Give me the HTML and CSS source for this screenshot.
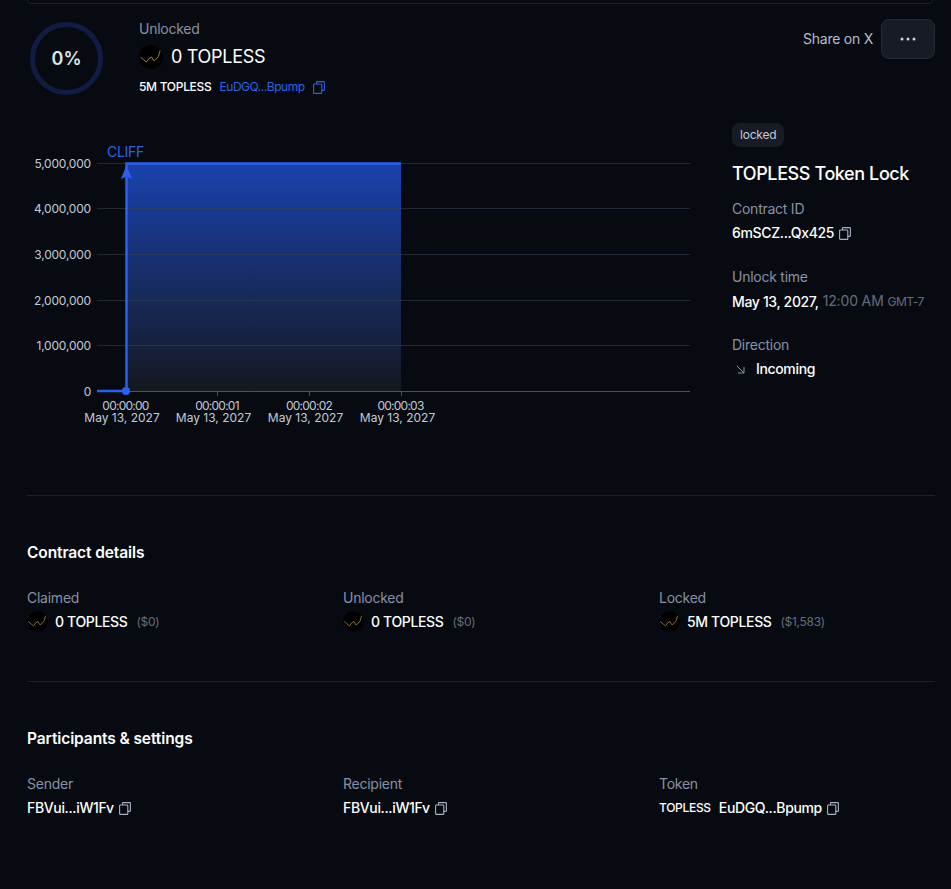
FILE: index.html
```html
<!DOCTYPE html>
<html lang="en">
<head>
    <meta charset="UTF-8">
    <meta name="viewport" content="width=device-width, initial-scale=1.0">
    <title>TOPLESS Token Lock</title>
    <link rel="stylesheet" href="styles.css">
</head>
<body>
    <svg class="defs" width="0" height="0">
        <symbol id="copy" viewBox="0 0 12 13">
            <path d="M3.500 3V1.200c0-.3.200-.6.600-.6h6.700c.3 0 .6.300.6.600v7.600c0 .3-.3.600-.6.600H8.800" fill="none" stroke="currentColor" stroke-width="1.100"/>
            <rect x=".6" y="3" width="8.200" height="9.400" rx=".7" fill="none" stroke="currentColor" stroke-width="1.100"/>
        </symbol>
        <symbol id="logo" viewBox="0 0 24 24">
            <circle cx="12" cy="12" r="12" fill="#000"/>
            <path d="M1.400 12l3 2.500 3 2.500 2.500-3.500 2.700-1.500 1.800 3.500 2-.5 3-3.500 1.800-6" fill="none" stroke="#a88a4a" stroke-width=".9"/>
        </symbol>
    </svg>

    <main class="page">
        <div class="top-card"></div>

        <header class="head">
            <div class="ring"><span>0%</span></div>
            <div class="head-info">
                <div class="label">Unlocked</div>
                <div class="head-amount">
                    <svg class="logo"><use href="#logo"/></svg>
                    <span>0 TOPLESS</span>
                </div>
                <div class="head-meta">
                    <span class="head-total">5M TOPLESS</span>
                    <span class="head-addr">EuDGQ...Bpump</span>
                    <svg class="copy blue"><use href="#copy"/></svg>
                </div>
            </div>
            <div class="actions">
                <span class="share">Share on X</span>
                <button class="more" type="button" aria-label="More">
                    <svg width="16" height="4" viewBox="0 0 16 4"><circle cx="2" cy="2" r="1.500" fill="#cbd5e1"/><circle cx="8" cy="2" r="1.500" fill="#cbd5e1"/><circle cx="14" cy="2" r="1.500" fill="#cbd5e1"/></svg>
                </button>
            </div>
        </header>

        <section class="overview">
            <svg class="chart" width="680" height="320" viewBox="27 122 680 320">
                <defs>
                    <linearGradient id="area" x1="0" y1="0" x2="0" y2="1">
                        <stop offset="0" stop-color="#1a42ae"/>
                        <stop offset="1" stop-color="#14181f"/>
                    </linearGradient>
                </defs>
                <rect x="126" y="163" width="275" height="228" fill="url(#area)"/>
                <g class="grid">
                    <line x1="97" x2="690" y1="163.500" y2="163.500"/>
                    <line x1="97" x2="690" y1="208.500" y2="208.500"/>
                    <line x1="97" x2="690" y1="254.500" y2="254.500"/>
                    <line x1="97" x2="690" y1="300.500" y2="300.500"/>
                    <line x1="97" x2="690" y1="345.500" y2="345.500"/>
                </g>
                <g class="axis">
                    <line x1="97" x2="690" y1="391.500" y2="391.500"/>
                    <line x1="217.500" x2="217.500" y1="391" y2="396"/>
                    <line x1="309.500" x2="309.500" y1="391" y2="396"/>
                    <line x1="401.500" x2="401.500" y1="391" y2="396"/>
                </g>
                <g class="ylabels">
                    <text x="91" y="168">5,000,000</text>
                    <text x="91" y="213">4,000,000</text>
                    <text x="91" y="259">3,000,000</text>
                    <text x="91" y="305">2,000,000</text>
                    <text x="91" y="350">1,000,000</text>
                    <text x="91" y="396">0</text>
                </g>
                <path class="line" d="M97 391H126.500V163.500H401"/>
                <path d="M126.500 165l-5.500 14 5.500-2.500 5.500 2.500z" fill="#2a5ff0"/>
                <circle cx="126" cy="391" r="4" fill="#2a5ff0"/>
                <text class="cliff" x="107" y="157">CLIFF</text>
                <g class="xlabels">
                    <text class="tick-time" x="125.500" y="410">00:00:00</text>
                    <text x="122" y="422">May 13, 2027</text>
                    <text class="tick-time" x="217" y="410">00:00:01</text>
                    <text x="213.500" y="422">May 13, 2027</text>
                    <text class="tick-time" x="309" y="410">00:00:02</text>
                    <text x="305.500" y="422">May 13, 2027</text>
                    <text class="tick-time" x="400.500" y="410">00:00:03</text>
                    <text x="397.500" y="422">May 13, 2027</text>
                </g>
            </svg>

            <aside class="side">
                <span class="badge">locked</span>
                <h1>TOPLESS Token Lock</h1>
                <div class="side-item">
                    <div class="label">Contract ID</div>
                    <div class="value">6mSCZ...Qx425 <svg class="copy"><use href="#copy"/></svg></div>
                </div>
                <div class="side-item">
                    <div class="label">Unlock time</div>
                    <div class="value">May 13, 2027, <span class="time">12:00 AM <small>GMT-7</small></span></div>
                </div>
                <div class="side-item">
                    <div class="label">Direction</div>
                    <div class="value direction">
                        <svg width="9" height="9" viewBox="0 0 9 9"><path d="M.8.8l7 7M8 2v6H2" fill="none" stroke="#8b95a8" stroke-width="1"/></svg>
                        Incoming
                    </div>
                </div>
            </aside>
        </section>

        <section class="block">
            <h2>Contract details</h2>
            <div class="cols">
                <div>
                    <div class="label">Claimed</div>
                    <div class="value"><svg class="logo small"><use href="#logo"/></svg>0 TOPLESS <span class="usd">($0)</span></div>
                </div>
                <div>
                    <div class="label">Unlocked</div>
                    <div class="value"><svg class="logo small"><use href="#logo"/></svg>0 TOPLESS <span class="usd">($0)</span></div>
                </div>
                <div>
                    <div class="label">Locked</div>
                    <div class="value"><svg class="logo small"><use href="#logo"/></svg>5M TOPLESS <span class="usd">($1,583)</span></div>
                </div>
            </div>
        </section>

        <section class="block">
            <h2>Participants &amp; settings</h2>
            <div class="cols">
                <div>
                    <div class="label">Sender</div>
                    <div class="value addr">FBVui...iW1Fv <svg class="copy"><use href="#copy"/></svg></div>
                </div>
                <div>
                    <div class="label">Recipient</div>
                    <div class="value addr">FBVui...iW1Fv <svg class="copy"><use href="#copy"/></svg></div>
                </div>
                <div>
                    <div class="label">Token</div>
                    <div class="value addr"><span class="symbol">TOPLESS</span>EuDGQ...Bpump <svg class="copy"><use href="#copy"/></svg></div>
                </div>
            </div>
        </section>
    </main>
</body>
</html>
```

FILE: styles.css
```css
* {
    box-sizing: border-box;
    margin: 0;
    padding: 0;
}

html {
    background-color: #070b11;
}

body {
    color: #fff;
    font-family: Inter, "Liberation Sans", sans-serif;
    font-size: 14px;
    line-height: 20px;
    height: 889px;
    overflow: hidden;
}

.defs {
    position: absolute;
}

.page {
    padding: 0 16px 0 27px;
}

.top-card {
    height: 4px;
    margin-right: 2px;
    border: 1px solid #1a212d;
    border-top: 0;
    border-radius: 0 0 8px 8px;
}

.head {
    display: flex;
    height: 116px;
    padding-top: 18px;
}

.ring {
    display: flex;
    align-items: center;
    justify-content: center;
    width: 73px;
    height: 73px;
    margin-left: 3px;
    border: 5px solid #111c45;
    border-radius: 50%;
    color: #dbe4f0;
    font-size: 18px;
    font-weight: 600;
}

.head-info {
    margin-left: 36px;
    flex: 1;
}

.label {
    color: #8791a6;
    font-size: 14px;
    line-height: 20px;
    letter-spacing: -.25px;
}

.head-info .label {
    margin-top: -3px;
}

.head-amount {
    display: flex;
    align-items: center;
    gap: 8px;
    margin-top: 5px;
    font-size: 18px;
    line-height: 26px;
    letter-spacing: -.3px;
}

.logo {
    width: 24px;
    height: 24px;
    flex: none;
}

.logo.small {
    width: 21px;
    height: 21px;
    margin-right: 2px;
}

.head-meta {
    display: flex;
    align-items: center;
    margin-top: 8px;
    font-size: 12px;
    line-height: 18px;
}

.head-total {
    font-weight: 500;
    letter-spacing: -.3px;
}

.head-addr {
    margin: 0 8px 0 8px;
    color: #2f62e0;
    letter-spacing: -.45px;
}

.copy {
    width: 12px;
    height: 13px;
    flex: none;
    color: #a8b1c2;
}

.copy.blue {
    color: #2f62e0;
}

.actions {
    display: flex;
    align-items: flex-start;
    gap: 8px;
}

.share {
    margin-top: 7px;
    color: #b4bdcc;
    letter-spacing: -.25px;
}

.more {
    display: flex;
    align-items: center;
    justify-content: center;
    width: 54px;
    height: 40px;
    margin-top: -3px;
    border: 1px solid #232a36;
    border-radius: 8px;
    background-color: #161b25;
}

.overview {
    display: flex;
    height: 376px;
    border-bottom: 1px solid #1a212d;
}

.chart {
    flex: none;
    margin-top: 2px;
}

.grid line {
    stroke: #3a4256;
    stroke-opacity: .55;
}

.axis line {
    stroke: #4a5160;
}

.line {
    fill: none;
    stroke: #2a5ff0;
    stroke-width: 2.500;
}

.ylabels text,
.xlabels text {
    fill: #c3cad6;
    font-size: 12px;
}

.ylabels text {
    text-anchor: end;
    letter-spacing: -.2px;
}

.xlabels text {
    text-anchor: middle;
}

.xlabels .tick-time {
    letter-spacing: -.75px;
}

.cliff {
    fill: #2f62e0;
    font-size: 14px;
    letter-spacing: -.3px;
}

.side {
    margin-left: 25px;
    padding-top: 3px;
}

.badge {
    display: inline-block;
    padding: 0 8px;
    border-radius: 8px;
    background-color: #161b25;
    color: #c3cad6;
    font-size: 12px;
    line-height: 24px;
    letter-spacing: -.2px;
}

h1 {
    margin-top: 13px;
    font-size: 18px;
    font-weight: 500;
    line-height: 28px;
    letter-spacing: -.4px;
}

.side-item {
    margin-top: 11px;
}

.side-item + .side-item {
    margin-top: 24px;
}

.side-item:last-child {
    margin-top: 23px;
}

.value {
    display: flex;
    align-items: center;
    gap: 5px;
    margin-top: 4px;
    font-weight: 500;
    letter-spacing: -.35px;
    white-space: nowrap;
}

.cols .value {
    margin-top: 3px;
}

.cols .value.addr {
    margin-top: 4px;
}

.time {
    margin-left: -1px;
    color: #636d80;
    font-weight: 400;
    letter-spacing: -.15px;
}

.time small {
    font-size: 12px;
    letter-spacing: -.45px;
}

.direction svg {
    margin: 0 6px 0 4px;
}

.block {
    height: 186px;
    padding-top: 46px;
    border-bottom: 1px solid #1a212d;
}

.block:last-child {
    border-bottom: 0;
}

h2 {
    font-size: 15.500px;
    font-weight: 600;
    line-height: 22px;
    letter-spacing: -.1px;
}

.cols {
    display: grid;
    grid-template-columns: 316px 316px 1fr;
    margin-top: 24px;
}

.usd {
    margin-left: 4px;
    color: #636d80;
    font-size: 12px;
    font-weight: 400;
    letter-spacing: -.3px;
}

.symbol {
    margin-right: 3px;
    font-size: 12px;
    letter-spacing: -.3px;
}
```
